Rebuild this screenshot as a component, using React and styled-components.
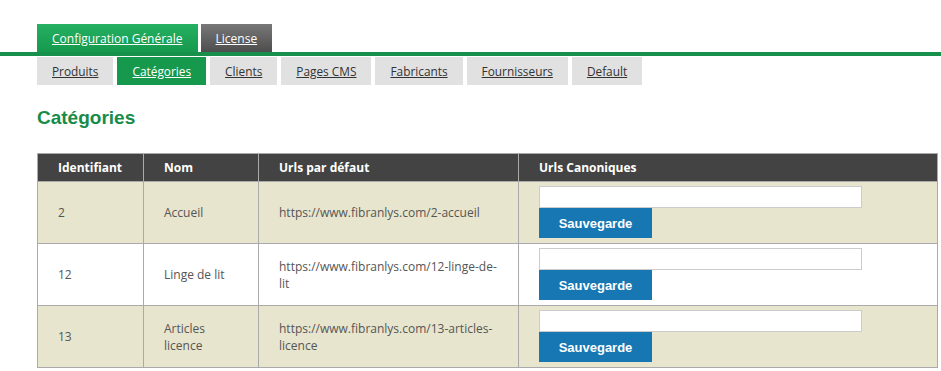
import React from 'react'
import styled, { createGlobalStyle } from 'styled-components'

const GlobalStyle = createGlobalStyle`
    body {
        margin: 0;
        background: #ffffff;
        font-family: "Open Sans", "Liberation Sans", sans-serif;
    }
`

const topTabs = [
    { label: 'Configuration Générale', active: true },
    { label: 'License', active: false },
]

const subTabs = ['Produits', 'Catégories', 'Clients', 'Pages CMS', 'Fabricants', 'Fournisseurs', 'Default']

const rows = [
    { id: '2', name: 'Accueil', url: 'https://www.fibranlys.com/2-accueil' },
    { id: '12', name: 'Linge de lit', url: 'https://www.fibranlys.com/12-linge-de-lit' },
    { id: '13', name: 'Articles licence', url: 'https://www.fibranlys.com/13-articles-licence' },
]

function App() {
    return (
        <Page>
            <GlobalStyle />
            <TopBar>
                {topTabs.map(t => (
                    <TopTab key={t.label} $active={t.active}>
                        <a href="#">{t.label}</a>
                    </TopTab>
                ))}
            </TopBar>
            <SubBar>
                {subTabs.map(t => (
                    <SubTab key={t} $active={t === 'Catégories'}>
                        <a href="#">{t}</a>
                    </SubTab>
                ))}
            </SubBar>
            <Content>
                <Title>Catégories</Title>
                <Table>
                    <colgroup>
                        <col style={{ width: 106 }} />
                        <col style={{ width: 115 }} />
                        <col style={{ width: 260 }} />
                        <col />
                    </colgroup>
                    <thead>
                        <tr>
                            <Th>Identifiant</Th>
                            <Th>Nom</Th>
                            <Th>Urls par défaut</Th>
                            <Th>Urls Canoniques</Th>
                        </tr>
                    </thead>
                    <tbody>
                        {rows.map((r, i) => (
                            <Row key={r.id} $odd={i % 2 === 0}>
                                <Td>{r.id}</Td>
                                <Td>{r.name}</Td>
                                <Td>{r.url}</Td>
                                <FormCell>
                                    <UrlInput type="text" />
                                    <SaveButton>Sauvegarde</SaveButton>
                                </FormCell>
                            </Row>
                        ))}
                    </tbody>
                </Table>
            </Content>
        </Page>
    )
}

export default App

const Page = styled.div`
    width: 941px;
    height: 371px;
    overflow: hidden;
`

const TopBar = styled.div`
    display: flex;
    gap: 3px;
    padding: 24px 0 0 37px;
    border-bottom: 4px solid #16904a;
`

const TopTab = styled.div`
    height: 28px;
    padding: 0 15px;
    display: flex;
    align-items: center;
    background: ${p => p.$active
        ? 'linear-gradient(#25b062, #16994d)'
        : 'linear-gradient(#787878, #4d4d4d)'};
    a {
        color: #ffffff;
        font-size: 12px;
        text-decoration: underline;
    }
`

const SubBar = styled.div`
    display: flex;
    gap: 4px;
    padding: 1px 37px 0;
`

const SubTab = styled.div`
    height: 28px;
    padding: 0 15px;
    display: flex;
    align-items: center;
    background: ${p => p.$active ? '#16994d' : '#e1e1e1'};
    a {
        color: ${p => p.$active ? '#ffffff' : '#333333'};
        font-size: 11.85px;
        text-decoration: underline;
    }
`

const Content = styled.div`
    padding: 0 3px 0 37px;
`

const Title = styled.h2`
    margin: 21px 0 23px;
    font-family: "Liberation Sans", Arial, sans-serif;
    font-size: 19px;
    font-weight: bold;
    line-height: 24px;
    color: #178c48;
`

const Table = styled.table`
    width: 901px;
    table-layout: fixed;
    border-collapse: collapse;
    border: 1px solid #aaaaaa;
`

const Th = styled.th`
    height: 27px;
    padding: 0 20px;
    text-align: left;
    background: #434343;
    color: #ffffff;
    font-size: 12px;
    font-weight: 700;
    border: 1px solid #aaaaaa;
`

const Row = styled.tr`
    background: ${p => p.$odd ? '#e7e5cd' : '#ffffff'};
`

const Td = styled.td`
    padding: 0 20px;
    color: #555555;
    font-size: 12px;
    line-height: 17px;
    border: 1px solid #aaaaaa;
    vertical-align: middle;
`

const FormCell = styled.td`
    padding: 4px 20px 5px 20px;
    border: 1px solid #aaaaaa;
    vertical-align: top;
`

const UrlInput = styled.input`
    display: block;
    box-sizing: border-box;
    width: 323px;
    height: 22px;
    margin: 0;
    border: 1px solid #cccccc;
    background: #ffffff;
    outline: none;
`

const SaveButton = styled.button`
    display: block;
    width: 113px;
    height: 30px;
    margin: 0;
    border: none;
    background: #1677b3;
    color: #ffffff;
    font-family: "Liberation Sans", Arial, sans-serif;
    font-size: 13px;
    font-weight: bold;
    cursor: pointer;
`
